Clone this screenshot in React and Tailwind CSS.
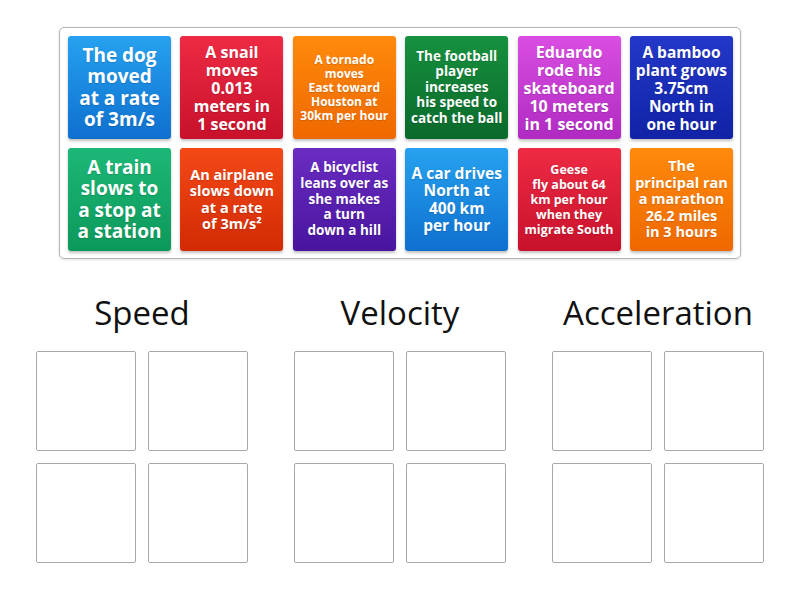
import React from "react";

const tiles = [
  { lines: ["The dog", "moved", "at a rate", "of 3m/s"], c: "bg-linear-to-b from-[#27a2ef] to-[#0f6fcf]", t: "text-[19px] leading-[21.5px]" },
  { lines: ["A snail", "moves", "0.013", "meters in", "1 second"], c: "bg-linear-to-b from-[#ee2a44] to-[#c8102b]", t: "text-[16px] leading-[18px]" },
  { lines: ["A tornado", "moves", "East toward", "Houston at", "30km per hour"], c: "bg-linear-to-b from-[#ff8a0c] to-[#ee6800]", t: "text-[12px] leading-[14px]" },
  { lines: ["The football", "player", "increases", "his speed to", "catch the ball"], c: "bg-linear-to-b from-[#17913f] to-[#0a692b]", t: "text-[13.5px] leading-[15.5px]" },
  { lines: ["Eduardo", "rode his", "skateboard", "10 meters", "in 1 second"], c: "bg-linear-to-b from-[#da4de2] to-[#b02ac2]", t: "text-[16px] leading-[18px]" },
  { lines: ["A bamboo", "plant grows", "3.75cm", "North in", "one hour"], c: "bg-linear-to-b from-[#2338c8] to-[#1122a6]", t: "text-[15.5px] leading-[18px]" },
  { lines: ["A train", "slows to", "a stop at", "a station"], c: "bg-linear-to-b from-[#1cb877] to-[#0b985b]", t: "text-[19px] leading-[21.5px]" },
  { lines: ["An airplane", "slows down", "at a rate", "of 3m/s²"], c: "bg-linear-to-b from-[#f44816] to-[#d22a03]", t: "text-[14.5px] leading-[16.5px]" },
  { lines: ["A bicyclist", "leans over as", "she makes", "a turn", "down a hill"], c: "bg-linear-to-b from-[#6b2cc2] to-[#48149e]", t: "text-[13.5px] leading-[15.8px]" },
  { lines: ["A car drives", "North at", "400 km", "per hour"], c: "bg-linear-to-b from-[#27a2ef] to-[#0f6fcf]", t: "text-[15.5px] leading-[17.5px]" },
  { lines: ["Geese", "fly about 64", "km per hour", "when they", "migrate South"], c: "bg-linear-to-b from-[#ee2a44] to-[#c8102b]", t: "text-[12.5px] leading-[15px]" },
  { lines: ["The", "principal ran", "a marathon", "26.2 miles", "in 3 hours"], c: "bg-linear-to-b from-[#ff8a0c] to-[#ee6800]", t: "text-[14.5px] leading-[16.5px]" },
];

const groups = ["Speed", "Velocity", "Acceleration"];

export default function App() {
  return (
    <div className="w-[800px] h-[600px] bg-white pt-[27px]" style={{ fontFamily: '"Open Sans", "Liberation Sans", sans-serif' }}>
      <div className="mx-auto w-[682px] h-[232px] border border-[#b4b4b4] rounded-[5px] shadow-[0_1px_3px_rgba(0,0,0,0.12)] pt-[8px] px-[8px]">
        <div className="grid grid-cols-[repeat(6,103px)] gap-x-[9.4px] gap-y-[9px]">
          {tiles.map((tile, i) => (
            <div
              key={i}
              className={`h-[103px] rounded-[3px] flex items-center justify-center text-center text-white font-bold shadow-[0_2px_3px_rgba(0,0,0,0.25)] [text-shadow:0_1px_1px_rgba(0,0,0,0.15)] ${tile.c} ${tile.t}`}
            >
              <div className="whitespace-nowrap">
                {tile.lines.map((l, j) => (
                  <div key={j}>{l}</div>
                ))}
              </div>
            </div>
          ))}
        </div>
      </div>
      <div className="mt-[32px] flex justify-center gap-[46px]">
        {groups.map((g) => (
          <div key={g} className="w-[212px] flex flex-col items-center">
            <div className="h-[44px] leading-[44px] text-[33px] text-[#111] whitespace-nowrap">{g}</div>
            <div className="mt-[16px] grid grid-cols-2 gap-[12px]">
              {[0, 1, 2, 3].map((k) => (
                <div key={k} className="w-[100px] h-[100px] border border-[#a8a8a8] rounded-[2px] bg-white" />
              ))}
            </div>
          </div>
        ))}
      </div>
    </div>
  );
}
